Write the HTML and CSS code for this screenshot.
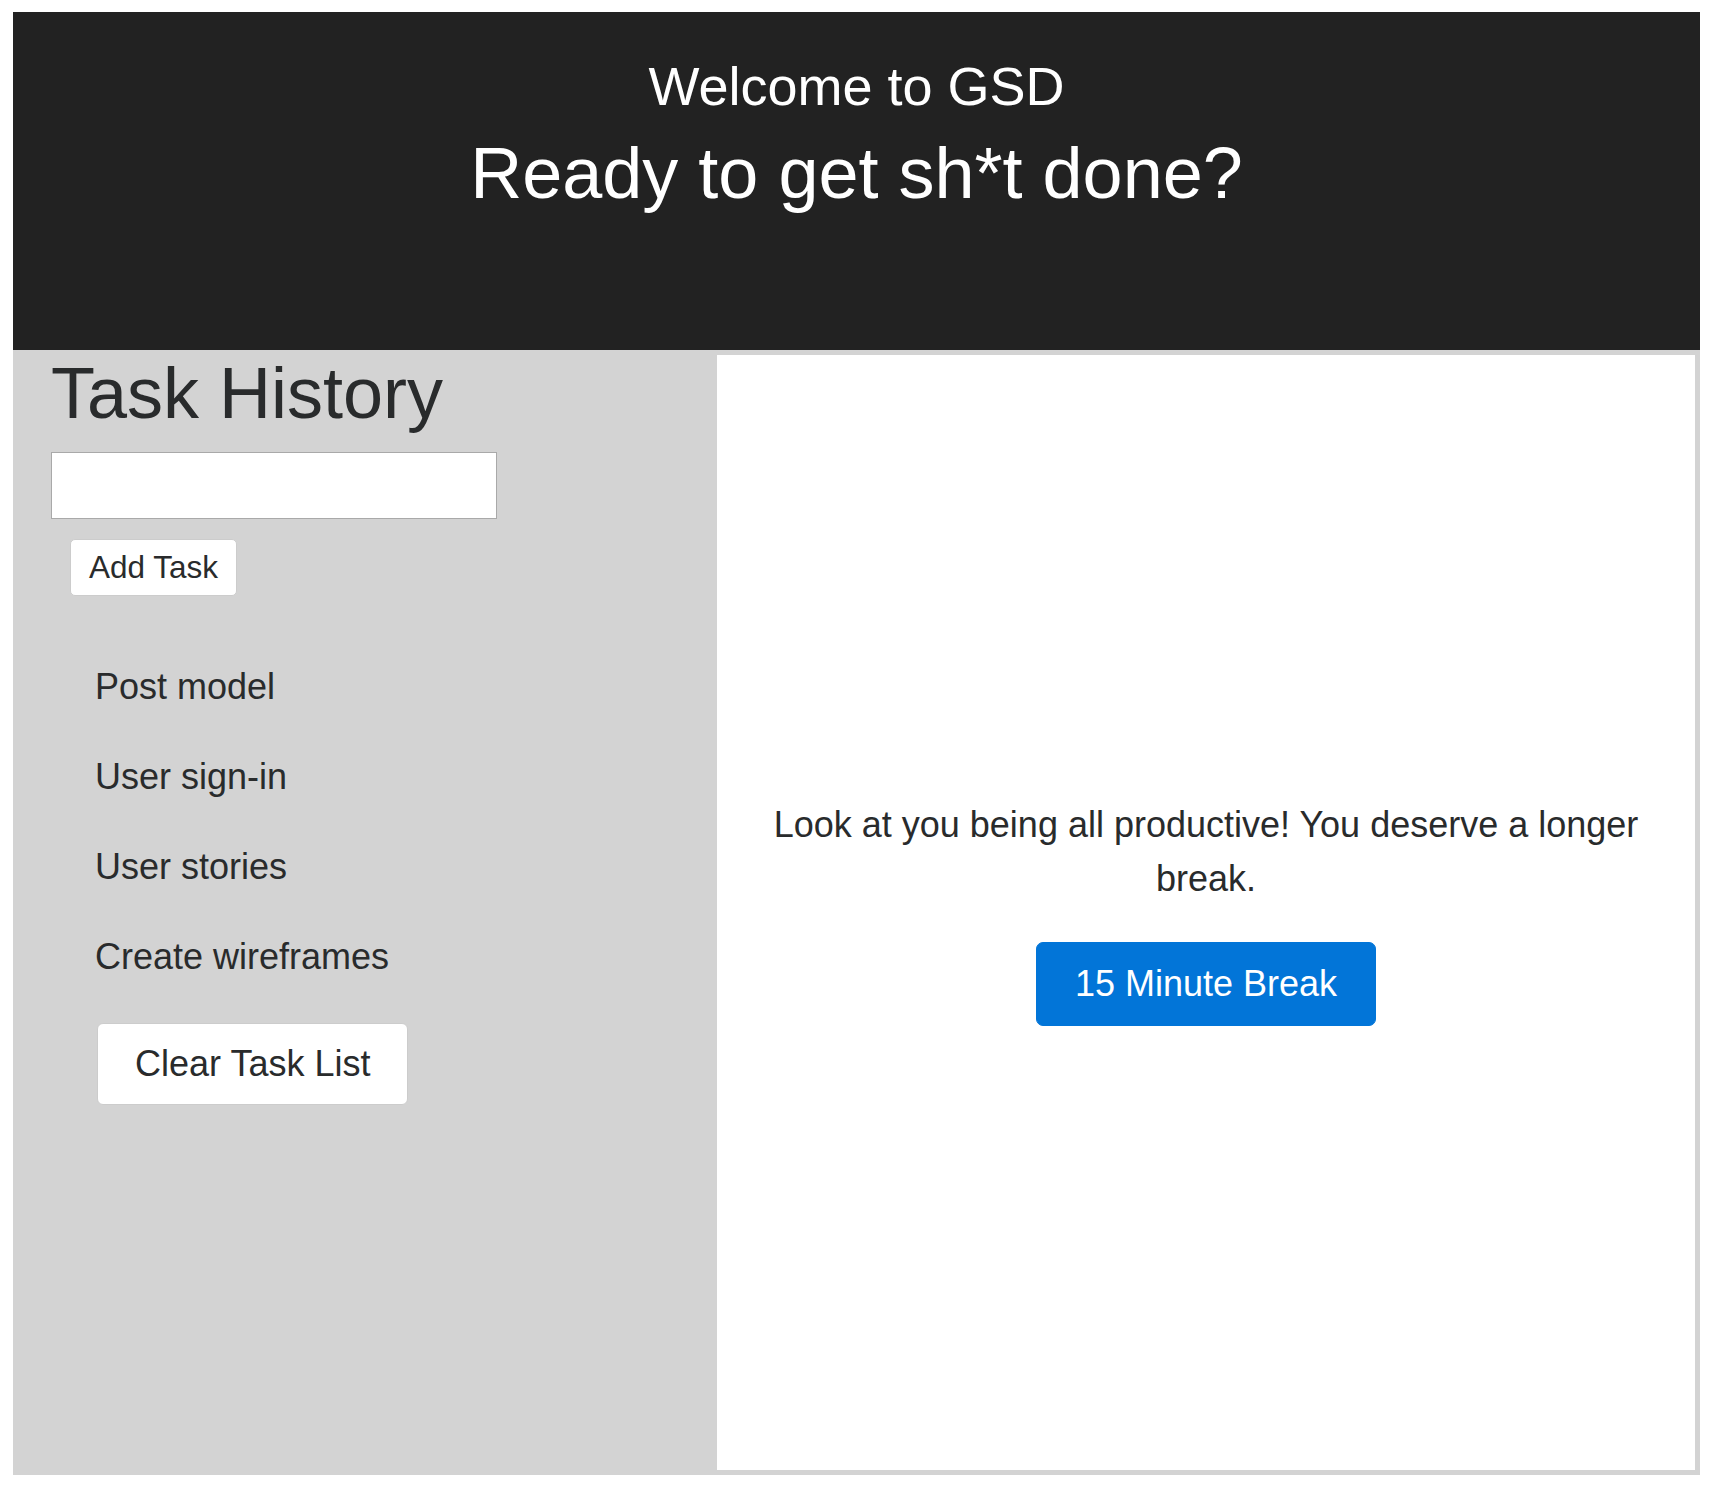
FILE: index.html
```html
<!DOCTYPE html>
<html lang="en">
<head>
<meta charset="utf-8">
<title>GSD</title>
<link rel="stylesheet" href="styles.css">
</head>
<body>
  <header class="hero">
    <h1 class="hero-title">Welcome to GSD</h1>
    <h2 class="hero-sub">Ready to get sh*t done?</h2>
  </header>
  <main class="workspace">
    <section class="tasks">
      <h2 class="tasks-title">Task History</h2>
      <input class="task-input" type="text" aria-label="New task">
      <button class="btn btn-add" type="button">Add Task</button>
      <div class="task-list-wrap">
        <ul class="task-list">
          <li class="task-item">Post model</li>
          <li class="task-item">User sign-in</li>
          <li class="task-item">User stories</li>
          <li class="task-item">Create wireframes</li>
        </ul>
        <button class="btn btn-clear" type="button">Clear Task List</button>
      </div>
    </section>
    <section class="break-panel">
      <p class="break-msg">Look at you being all productive! You deserve a longer break.</p>
      <button class="btn-primary" type="button">15 Minute Break</button>
    </section>
  </main>
</body>
</html>
```

FILE: styles.css
```css
* { box-sizing: border-box; }

html, body {
  background: #ffffff;
}

body {
  margin: 12px 14px 0 13px;
  font-family: "Liberation Sans", Arial, Helvetica, sans-serif;
  color: #292b2c;
}

.hero {
  background: #222222;
  color: #ffffff;
  height: 338px;
  padding-top: 42px;
  text-align: center;
}

.hero-title {
  margin: 0;
  font-size: 54px;
  line-height: 1.2;
  font-weight: 400;
}

.hero-sub {
  margin: 11px 0 0;
  font-size: 72px;
  line-height: 1.2;
  font-weight: 400;
}

.workspace {
  display: grid;
  grid-template-columns: 699px 1fr;
  min-height: 1125px;
  background: #d3d3d3;
}

.tasks {
  padding-left: 38px;
  display: flex;
  flex-direction: column;
  align-items: flex-start;
}

.tasks-title {
  margin: 0;
  font-size: 72px;
  line-height: 86px;
  font-weight: 400;
  color: #292b2c;
}

.task-input {
  margin-top: 16px;
  width: 446px;
  height: 67px;
  border: 1px solid #a9a9a9;
  background: #ffffff;
  font-size: 30px;
  padding: 0 10px;
  font-family: inherit;
}

.btn {
  background: #ffffff;
  border: 1px solid #cccccc;
  border-radius: 5px;
  color: #292b2c;
  font-family: inherit;
  cursor: pointer;
}

.btn-add {
  margin: 20px 0 0 19px;
  font-size: 31.5px;
  line-height: 35px;
  padding: 10px 18px;
}

.task-list-wrap {
  margin-top: 64px;
  margin-left: 44px;
}

.task-list {
  list-style: none;
  margin: 0;
  padding: 0;
}

.task-item {
  font-size: 36px;
  line-height: 54px;
  margin-bottom: 36px;
}

.task-item:last-child {
  margin-bottom: 39px;
}

.btn-clear {
  margin-left: 2px;
  font-size: 36px;
  line-height: 54px;
  padding: 13px 37px;
  border-radius: 6px;
}

.break-panel {
  background: #ffffff;
  border: 5px solid #d3d3d3;
  display: flex;
  flex-direction: column;
  align-items: center;
  justify-content: center;
  padding: 0 40px;
  text-align: center;
}

.break-msg {
  margin: -2px 0 36px;
  font-size: 36px;
  line-height: 54px;
  color: #292b2c;
}

.btn-primary {
  background: #0275d8;
  color: #ffffff;
  border: 1px solid #0275d8;
  border-radius: 7px;
  font-family: inherit;
  font-size: 36px;
  line-height: 54px;
  padding: 14px 38px;
  cursor: pointer;
}
```
